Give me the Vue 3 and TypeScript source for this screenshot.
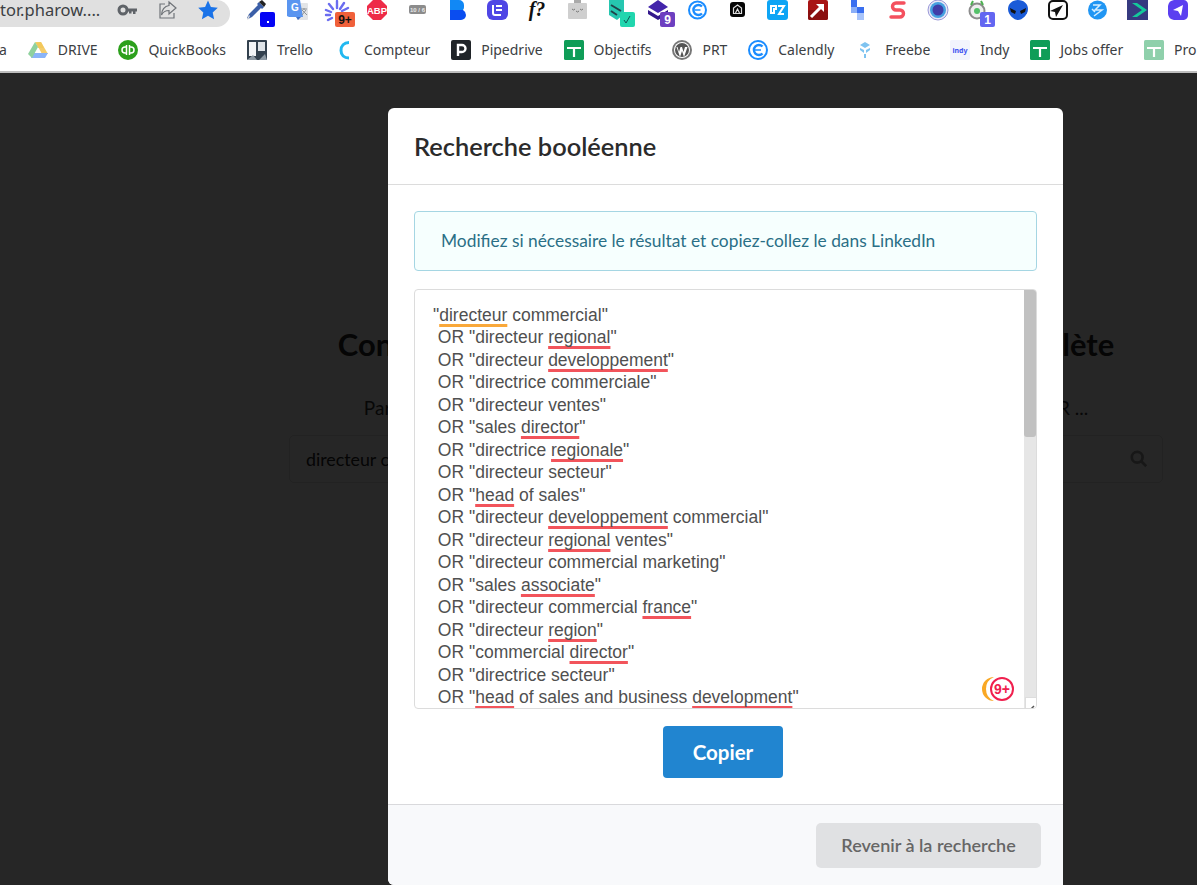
<script setup lang="ts">
type Part = { text: string; mark: string };

const raw: string[] = [
  '"{o:directeur} commercial"',
  ' OR "directeur {r:regional}"',
  ' OR "directeur {r:developpement}"',
  ' OR "directrice commerciale"',
  ' OR "directeur ventes"',
  ' OR "sales {r:director}"',
  ' OR "directrice {r:regionale}"',
  ' OR "directeur secteur"',
  ' OR "{r:head} of sales"',
  ' OR "directeur {r:developpement} commercial"',
  ' OR "directeur {r:regional} ventes"',
  ' OR "directeur commercial marketing"',
  ' OR "sales {r:associate}"',
  ' OR "directeur commercial {r:france}"',
  ' OR "directeur {r:region}"',
  ' OR "commercial {r:director}"',
  ' OR "directrice secteur"',
  ' OR "{r:head} of sales and business {r:development}"',
];

function parse(line: string): Part[] {
  const parts: Part[] = [];
  const re = /\{([ro]):([^}]+)\}|[^{]+/g;
  let m: RegExpExecArray | null;
  while ((m = re.exec(line)) !== null) {
    if (m[1]) parts.push({ text: m[2], mark: m[1] });
    else parts.push({ text: m[0], mark: '' });
  }
  return parts;
}

const lines: Part[][] = raw.map(parse);
</script>

<template>
  <div class="root">
    <header class="chrome">
      <div class="toolbar">
        <div class="omnibox">
          <span class="url">tor.pharow....</span>
          <svg class="o-icon key" width="22" height="20" viewBox="0 0 22 20">
            <circle cx="6" cy="10" r="4" fill="none" stroke="#5f6368" stroke-width="3" />
            <path d="M10 8.500h10v3h-1.500v2.500h-2.500v-2.500h-1.500v2h-2.500v-2h-2z" fill="#5f6368" />
          </svg>
          <svg class="o-icon share" width="22" height="22" viewBox="0 0 22 22" fill="none" stroke="#6f7378" stroke-width="1.200">
            <path d="M8 5H3v14h14v-5" />
            <path d="M12 3l7 6-7 6v-3.500c-4 0-6 1.500-7.500 4.500 0-5 3-9 7.500-9.500z" />
          </svg>
          <svg class="o-icon star" width="22" height="22" viewBox="0 0 22 22">
            <path d="M11 1.500l2.900 6.400 6.900.8-5.100 4.700 1.400 6.900L11 16.800l-6.100 3.500 1.400-6.900L1.200 8.700l6.900-.8z" fill="#1a73e8" />
          </svg>
        </div>
        <div class="exts">
          <svg class="ext" viewBox="0 0 40 27">
            <path d="M22 2l5 5-2 2-1-1-9 9-4 2-1-1 2-4 9-9-1-1z" fill="#3b5fa8" />
            <path d="M22 2l3-2 4 4-2 3z" fill="#222" />
            <path d="M13 16l-2 4-1-1 2-4z" fill="#ddd" />
            <rect x="23" y="12" width="15" height="15" rx="2" fill="#0505f5" />
            <rect x="30" y="21" width="2" height="2" fill="#fff" />
          </svg>
          <svg class="ext" viewBox="0 0 40 27">
            <rect x="20" y="3" width="11" height="17" rx="1" fill="#e3e5e7" />
            <path d="M10 0h13l3 17H12l-2-1z" fill="#5a95f0" />
            <path d="M19 17h5l-3 3z" fill="#3c6fc8" />
            <text x="14" y="11" class="t-g">G</text>
            <path d="M24 9h6M27 8v2M25 15l4-5M25 10l5 5" stroke="#8d9399" stroke-width="1" fill="none" />
          </svg>
          <svg class="ext" viewBox="0 0 40 27">
            <g stroke="#6a6cf0" stroke-width="2.400" stroke-linecap="round">
              <path d="M20 8V1M23 9l4-6M16 9l-4-5M14 12l-5-2M25 11l6-3M13 15H9M15 18l-4 2" />
            </g>
            <rect x="18" y="12" width="20" height="15" rx="2" fill="#f0603a" />
            <text x="28" y="24" class="t-badge t-dark">9+</text>
          </svg>
          <svg class="ext" viewBox="0 0 40 27">
            <path d="M16 0h8l6 6v8l-6 6h-8l-6-6V6z" fill="#ee2b47" />
            <text x="20" y="14" class="t-abp">ABP</text>
          </svg>
          <svg class="ext" viewBox="0 0 40 27">
            <rect x="12" y="5" width="17" height="9" rx="2" fill="#8c8c8c" />
            <text x="20.500" y="12" class="t-ten">10 / 6</text>
          </svg>
          <svg class="ext" viewBox="0 0 40 27">
            <path d="M13 0h9a5 5 0 0 1 5 5v2a4 4 0 0 1-1 3H13z" fill="#1188f5" />
            <path d="M13 10h13a6 6 0 0 1 3 5 5 5 0 0 1-5 5H13z" fill="#0a4df0" />
          </svg>
          <svg class="ext" viewBox="0 0 40 27">
            <rect x="10" y="0" width="21" height="20" rx="6" fill="#4f46e5" />
            <path d="M16 5v8a2 2 0 0 0 2 2h6M19 6h6M19 10h6" stroke="#fff" stroke-width="2" fill="none" />
          </svg>
          <svg class="ext" viewBox="0 0 40 27">
            <text x="20" y="16" class="t-f">f?</text>
          </svg>
          <svg class="ext" viewBox="0 0 40 27">
            <rect x="17" y="0" width="7" height="4" fill="#a9a9a9" />
            <rect x="11" y="3" width="19" height="16" rx="1" fill="#cfcfcf" />
            <path d="M15 9q1.500 2 3 0M19 11q1.500 2 3 0M23 9q1.500 2 3 0" stroke="#777" stroke-width="1" fill="none" />
          </svg>
          <svg class="ext" viewBox="0 0 40 27">
            <path d="M12 0h15v14l-7 6-8-5z" fill="#26c6b0" />
            <path d="M14 5l10 6M14 11l6 4" stroke="#20424a" stroke-width="2" fill="none" />
            <rect x="23" y="12" width="15" height="15" rx="2" fill="#21d6ae" />
            <path d="M27 20l2 3 4-7" stroke="#155" stroke-width="1" fill="none" />
          </svg>
          <svg class="ext" viewBox="0 0 40 27">
            <path d="M21 0l10 7-10 6-10-6z" fill="#4325ab" />
            <path d="M11 10l10 6 10-6v4l-10 6-10-6z" fill="#34198c" />
            <rect x="23" y="12" width="15" height="15" rx="2" fill="#6d3fc0" />
            <text x="30.500" y="24" class="t-badge t-white">9</text>
          </svg>
          <svg class="ext" viewBox="0 0 40 27">
            <circle cx="20.500" cy="10" r="8.500" fill="#fff" stroke="#1a8cff" stroke-width="2" />
            <path d="M25 6.500a5 5 0 1 0 0 7" fill="none" stroke="#1a8cff" stroke-width="2.400" />
            <path d="M17.500 10h6" stroke="#1a8cff" stroke-width="1.500" />
          </svg>
          <svg class="ext" viewBox="0 0 40 27">
            <rect x="13" y="2" width="15" height="15" rx="3" fill="#050505" />
            <path d="M20.500 5l4 3v5.500h-8V8zM18.500 13l2-4 2 4" stroke="#ddd" stroke-width="1.200" fill="none" />
          </svg>
          <svg class="ext" viewBox="0 0 40 27">
            <rect x="10" y="0" width="21" height="20" rx="3" fill="#0ea5f5" />
            <path d="M14 6h5v3l-2 0v4h-3zM21 6h6l-5 8h5" stroke="#fff" stroke-width="2" fill="none" />
          </svg>
          <svg class="ext" viewBox="0 0 40 27">
            <rect x="11" y="0" width="20" height="20" rx="2" fill="#a81414" />
            <rect x="11" y="10" width="20" height="10" rx="2" fill="#8a0f0f" />
            <path d="M14 17l10-10" stroke="#fff" stroke-width="3" />
            <path d="M19 4h8v8z" fill="#fff" />
          </svg>
          <svg class="ext" viewBox="0 0 40 27">
            <rect x="14" y="0" width="6" height="7" fill="#3a6ff0" />
            <rect x="14" y="7" width="6" height="6" fill="#8aaef7" />
            <rect x="20" y="7" width="7" height="6" fill="#3a6ff0" />
            <rect x="20" y="13" width="7" height="7" fill="#a8c4fa" />
          </svg>
          <svg class="ext" viewBox="0 0 40 27">
            <path d="M27 3H19a3.500 3.500 0 0 0 0 7h4a3.500 3.500 0 0 1 0 7h-9" fill="none" stroke="#f4505e" stroke-width="3.400" stroke-linecap="round" />
          </svg>
          <svg class="ext" viewBox="0 0 40 27">
            <circle cx="21" cy="10" r="10" fill="#e8e8f6" stroke="#9a98d8" stroke-width="1" />
            <circle cx="21" cy="10" r="8" fill="#45a0e0" />
            <circle cx="21" cy="10" r="5.500" fill="#3f3da8" />
          </svg>
          <svg class="ext" viewBox="0 0 40 27">
            <circle cx="20" cy="11" r="7.500" fill="#eee" stroke="#8c8c8c" stroke-width="2" />
            <path d="M14 5l2-4M26 5l-2-4" stroke="#4caf50" stroke-width="2" />
            <circle cx="20" cy="11" r="3" fill="#54c069" />
            <rect x="23" y="12" width="15" height="15" rx="2" fill="#6366f1" />
            <text x="30.500" y="24" class="t-badge t-white">1</text>
          </svg>
          <svg class="ext" viewBox="0 0 40 27">
            <path d="M21 0c6 0 10 4 10 9 0 6-6 11-10 11s-10-5-10-11c0-5 4-9 10-9z" fill="#1a5bd8" />
            <path d="M13 8l6 3-1 3-4-2zM29 8l-6 3 1 3 4-2z" fill="#111" />
          </svg>
          <svg class="ext" viewBox="0 0 40 27">
            <rect x="12" y="1" width="18" height="18" rx="4" fill="#fff" stroke="#111" stroke-width="2" />
            <path d="M26 5l-13 6 5 1 1 5z" fill="#111" />
          </svg>
          <svg class="ext" viewBox="0 0 40 27">
            <circle cx="20.500" cy="10" r="9.500" fill="#2196f3" />
            <path d="M16 5h7l-5 5h7l-8 6M15 9l3 3" stroke="#d6eeff" stroke-width="1.500" fill="none" />
          </svg>
          <svg class="ext" viewBox="0 0 40 27">
            <rect x="10" y="0" width="21" height="20" fill="#363a80" />
            <path d="M15 3l10 7-10 7h5l10-7-10-7z" fill="#14c99a" />
          </svg>
          <svg class="ext" viewBox="0 0 40 27">
            <path d="M17 0h10a5 5 0 0 1 4 5v10a5 5 0 0 1-4 5H17A7 7 0 0 1 11 14V6a7 7 0 0 1 6-6z" fill="#5b3ff0" />
            <path d="M16 10l10-5-2 11-3-5z" fill="#fff" />
          </svg>
        </div>
      </div>

      <nav class="bookmarks">
        <span class="bm bm-first"><span class="bm-text">a</span></span>
        <span class="bm">
          <svg class="bm-icon" viewBox="0 0 20 20">
            <path d="M7 2h6l3 6H10z" fill="#f5d36a" />
            <path d="M13 2l7 12h-6L8 3z" fill="#f3c65a" opacity=".9" />
            <path d="M5 13h15l-3 5H3z" fill="#8ab4f8" />
            <path d="M0 14L7 2l3 5-6 11z" fill="#8fd19e" />
          </svg>
          <span class="bm-text">DRIVE</span>
        </span>
        <span class="bm">
          <svg class="bm-icon" viewBox="0 0 20 20">
            <circle cx="10" cy="10" r="10" fill="#2ca01c" />
            <path d="M8.500 5v10M11.500 5v10M8.500 7H7a3 3 0 0 0 0 6h1.500M11.500 7H13a3 3 0 0 1 0 6h-1.500" stroke="#fff" stroke-width="1.500" fill="none" />
          </svg>
          <span class="bm-text">QuickBooks</span>
        </span>
        <span class="bm">
          <svg class="bm-icon" viewBox="0 0 20 20">
            <rect width="20" height="20" rx="1" fill="#33414e" />
            <rect x="2" y="2" width="7" height="14" fill="#f2f4f6" />
            <rect x="11" y="2" width="7" height="9" fill="#dfe4e8" />
            <path d="M0 20l6-5 4 5zM12 20l6-6 2 6z" fill="#8d99a3" />
          </svg>
          <span class="bm-text">Trello</span>
        </span>
        <span class="bm">
          <svg class="bm-icon" viewBox="0 0 20 20">
            <path d="M15 2.500C10 2.500 7 6 7 10.500S10 18 15 18" fill="none" stroke="#22b8f0" stroke-width="3" />
          </svg>
          <span class="bm-text">Compteur</span>
        </span>
        <span class="bm">
          <svg class="bm-icon" viewBox="0 0 20 20">
            <rect width="20" height="20" rx="2" fill="#202428" />
            <path d="M7 16V5h4a3.500 3.500 0 0 1 0 7H7" fill="none" stroke="#fff" stroke-width="2.400" />
          </svg>
          <span class="bm-text">Pipedrive</span>
        </span>
        <span class="bm">
          <svg class="bm-icon" viewBox="0 0 20 20">
            <rect width="20" height="20" rx="1.500" fill="#0f9d58" />
            <path d="M3 8h14M10 8v9" stroke="#fff" stroke-width="2.200" />
          </svg>
          <span class="bm-text">Objectifs</span>
        </span>
        <span class="bm">
          <svg class="bm-icon" viewBox="0 0 20 20">
            <circle cx="10" cy="10" r="10" fill="#777" />
            <circle cx="10" cy="10" r="8" fill="#fff" />
            <circle cx="10" cy="10" r="7" fill="#555" />
            <path d="M4.500 7l3.500 10 2-6 2 6 3.500-10h-2.500l-1.500 5-1.500-5h-1.500l-1.500 5-1.500-5z" fill="#fff" />
          </svg>
          <span class="bm-text">PRT</span>
        </span>
        <span class="bm">
          <svg class="bm-icon" viewBox="0 0 20 20">
            <circle cx="10" cy="10" r="9" fill="#fff" stroke="#1a8cff" stroke-width="2" />
            <path d="M14.500 6.500a5 5 0 1 0 0 7" fill="none" stroke="#1a8cff" stroke-width="2.400" />
            <path d="M7 10h6" stroke="#1a8cff" stroke-width="1.500" />
          </svg>
          <span class="bm-text">Calendly</span>
        </span>
        <span class="bm">
          <svg class="bm-icon" viewBox="0 0 20 20">
            <path d="M5 5l5-3 5 3-5 3zM5 8l4 2v3L5 10zM15 8l-4 2v3l4-3zM9 14h2v4H9z" fill="#7ec3f0" />
          </svg>
          <span class="bm-text">Freebe</span>
        </span>
        <span class="bm bm-indy">
          <svg class="bm-icon" viewBox="0 0 20 20">
            <rect width="20" height="20" rx="2" fill="#f3f4fd" />
            <text x="10" y="12.500" class="t-indy">indy</text>
          </svg>
          <span class="bm-text">Indy</span>
        </span>
        <span class="bm">
          <svg class="bm-icon" viewBox="0 0 20 20">
            <rect width="20" height="20" rx="1.500" fill="#0f9d58" />
            <path d="M3 8h14M10 8v9" stroke="#fff" stroke-width="2.200" />
          </svg>
          <span class="bm-text">Jobs offer</span>
        </span>
        <span class="bm">
          <svg class="bm-icon" viewBox="0 0 20 20">
            <rect width="20" height="20" rx="1.500" fill="#8fd0ab" />
            <path d="M3 8h14M10 8v9" stroke="#fff" stroke-width="2.200" />
          </svg>
          <span class="bm-text">Pro</span>
        </span>
      </nav>
    </header>

    <main class="page">
      <section class="hero">
        <h1 class="hero-title">Construisez une recherche LinkedIn booléenne complète</h1>
        <p class="hero-sub">Par exemple : directeur commercial, responsable des ventes régional France, Paris OR ...</p>
        <div class="hero-input">
          <span>directeur commercial</span>
          <svg width="18" height="18" viewBox="0 0 20 20" fill="none" stroke="#999" stroke-width="3">
            <circle cx="8" cy="8" r="6" />
            <path d="M12.500 12.500L18 18" />
          </svg>
        </div>
      </section>

      <div class="dimmer"></div>

      <div class="modal">
        <div class="modal-head">Recherche booléenne</div>
        <div class="modal-body">
          <div class="alert">Modifiez si nécessaire le résultat et copiez-collez le dans LinkedIn</div>
          <div class="area">
            <div class="area-text">
              <div v-for="(line, i) in lines" :key="i" class="line">
                <span v-for="(p, j) in line" :key="j" :class="{ red: p.mark === 'r', orange: p.mark === 'o' }">{{ p.text }}</span>
              </div>
            </div>
            <div class="scroll"><div class="thumb"></div></div>
            <div class="grip">
              <svg width="11" height="11" viewBox="0 0 11 11">
                <path d="M3 8L8 3M6 8l2-2" stroke="#555" stroke-width="1.500" />
              </svg>
            </div>
            <svg class="badge" width="34" height="26" viewBox="0 0 34 26">
              <path d="M13 1a12 12 0 0 0 0 24 13 13 0 0 1 0-24z" fill="#f9a825" />
              <circle cx="21" cy="13" r="11" fill="#fff" stroke="#f0204e" stroke-width="2" />
              <text x="21" y="18" class="t-nine">9+</text>
            </svg>
          </div>
          <div class="copy-row">
            <button class="copy" type="button">Copier</button>
          </div>
        </div>
        <div class="modal-foot">
          <button class="back" type="button">Revenir à la recherche</button>
        </div>
      </div>
    </main>
  </div>
</template>

<style>
html, body { margin: 0; padding: 0; background: #fff; overflow: hidden; }
</style>

<style scoped>
.root { width: 1197px; height: 885px; overflow: hidden; display: flex; flex-direction: column; font-family: Lato, sans-serif; }

.chrome { height: 73px; flex: none; background: #fff; box-sizing: border-box; border-bottom: 2px solid #bdbdbd; overflow: hidden; }
.toolbar { height: 28px; display: flex; align-items: flex-start; }
.omnibox { width: 230px; height: 27px; flex: none; background: #e0e0e0; border-radius: 0 14px 14px 0; box-sizing: border-box; display: flex; align-items: center; padding-bottom: 7px; }
.url { font: 16.500px/20px "Noto Sans", sans-serif; color: #3c4043; white-space: nowrap; width: 117px; flex: none; }
.o-icon { flex: none; }
.key { margin-right: 18px; }
.share { margin-right: 18px; }
.exts { display: flex; margin-left: 7px; }
.ext { width: 40px; height: 27px; flex: none; display: block; }
.t-g { font: bold 10px "Liberation Sans", sans-serif; fill: #fff; }
.t-badge { font: bold 12px "Liberation Sans", sans-serif; text-anchor: middle; }
.t-dark { fill: #111; }
.t-white { fill: #fff; }
.t-abp { font: bold 9.500px "Liberation Sans", sans-serif; fill: #fff; text-anchor: middle; }
.t-ten { font: bold 6px "Liberation Sans", sans-serif; fill: #e8e8e8; text-anchor: middle; }
.t-f { font: italic bold 20px "Liberation Serif", serif; fill: #111; text-anchor: middle; }
.t-indy { font: bold 7px "Noto Sans", sans-serif; fill: #3d50f0; text-anchor: middle; }
.t-nine { font: bold 14px "Liberation Sans", sans-serif; fill: #f0204e; text-anchor: middle; }

.bookmarks { height: 43px; display: flex; align-items: center; gap: 20.850px; white-space: nowrap; }
.bm { display: flex; align-items: center; gap: 10px; flex: none; }
.bm-first { margin-left: -1px; }
.bm-indy { margin-left: -1px; }
.bm-icon { width: 20px; height: 20px; flex: none; display: block; }
.bm-text { font: 14px/20px "Noto Sans", sans-serif; color: #3c4043; }

.page { flex: 1; position: relative; background: #fff; overflow: hidden; }
.hero { display: flex; flex-direction: column; align-items: center; width: 874px; margin: 0 0 0 289px; }
.hero-title { margin: 251px 0 0; font: bold 30.900px/42px Lato, sans-serif; color: #222; white-space: nowrap; text-align: center; }
.hero-sub { margin: 29px 0 0; font: 19px/26px Lato, sans-serif; color: #333; white-space: nowrap; }
.hero-input { margin-top: 14px; width: 100%; height: 48px; box-sizing: border-box; border: 1px solid #e2e2e2; border-radius: 5px; display: flex; align-items: center; justify-content: space-between; padding: 0 14px 0 16px; font: 17.800px Lato, sans-serif; color: #222; }

.dimmer { position: absolute; inset: 0; background: rgba(0, 0, 0, .85); }

.modal { position: absolute; left: 388px; top: 35px; width: 675px; height: 777px; background: #fff; border-radius: 6px 6px 0 6px; display: flex; flex-direction: column; overflow: hidden; }
.modal-head { height: 77px; flex: none; box-sizing: border-box; border-bottom: 1px solid #dcdcdc; padding: 0 26px; display: flex; align-items: center; font: 600 25.400px Lato, sans-serif; color: #2b2b2b; }
.modal-body { flex: 1; padding: 26px 26px 0; display: flex; flex-direction: column; min-height: 0; }
.alert { height: 60px; flex: none; box-sizing: border-box; background: #f6fffe; border: 1px solid #a5d6e3; border-radius: 4px; padding: 0 26px 2px; display: flex; align-items: center; font: 17.350px Lato, sans-serif; color: #2a6f86; }
.area { position: relative; margin-top: 18px; height: 420px; flex: none; box-sizing: border-box; border: 1px solid #dcdcdc; border-radius: 4px; overflow: hidden; }
.area-text { padding: 13.700px 0 0 18px; font: 17.500px/22.500px "Liberation Sans", Arial, sans-serif; color: #505050; white-space: pre; }
.line { height: 22.500px; }
.red, .orange { text-decoration: underline; text-decoration-thickness: 3px; text-underline-offset: 3px; text-decoration-skip-ink: none; }
.red { text-decoration-color: #f2545b; }
.orange { text-decoration-color: #f9a83a; }
.scroll { position: absolute; right: 0; top: 0; bottom: 0; width: 12px; background: #e6e6e6; }
.thumb { height: 147px; background: #c1c1c1; border-radius: 0 0 3px 3px; }
.grip { position: absolute; right: 0; bottom: 0; width: 11px; height: 11px; background: #fff; border-top: 1px solid #ddd; border-left: 1px solid #ddd; box-sizing: border-box; }
.badge { position: absolute; left: 566px; top: 386px; }
.copy-row { display: flex; justify-content: center; margin-top: 17px; padding-right: 5px; }
.copy { width: 120px; height: 52px; border: 0; border-radius: 4px; background: #2185d0; color: #fff; font: bold 20.500px Lato, sans-serif; padding: 0; }
.modal-foot { height: 81px; flex: none; box-sizing: border-box; border-top: 1px solid #d9d9dc; background: #f8f9fb; display: flex; justify-content: flex-end; padding: 18px 22px 0 0; }
.back { width: 225px; height: 45px; border: 0; border-radius: 5px; background: #e0e1e3; color: #666; font: 600 18px Lato, sans-serif; padding: 0 0 2px; }
</style>
